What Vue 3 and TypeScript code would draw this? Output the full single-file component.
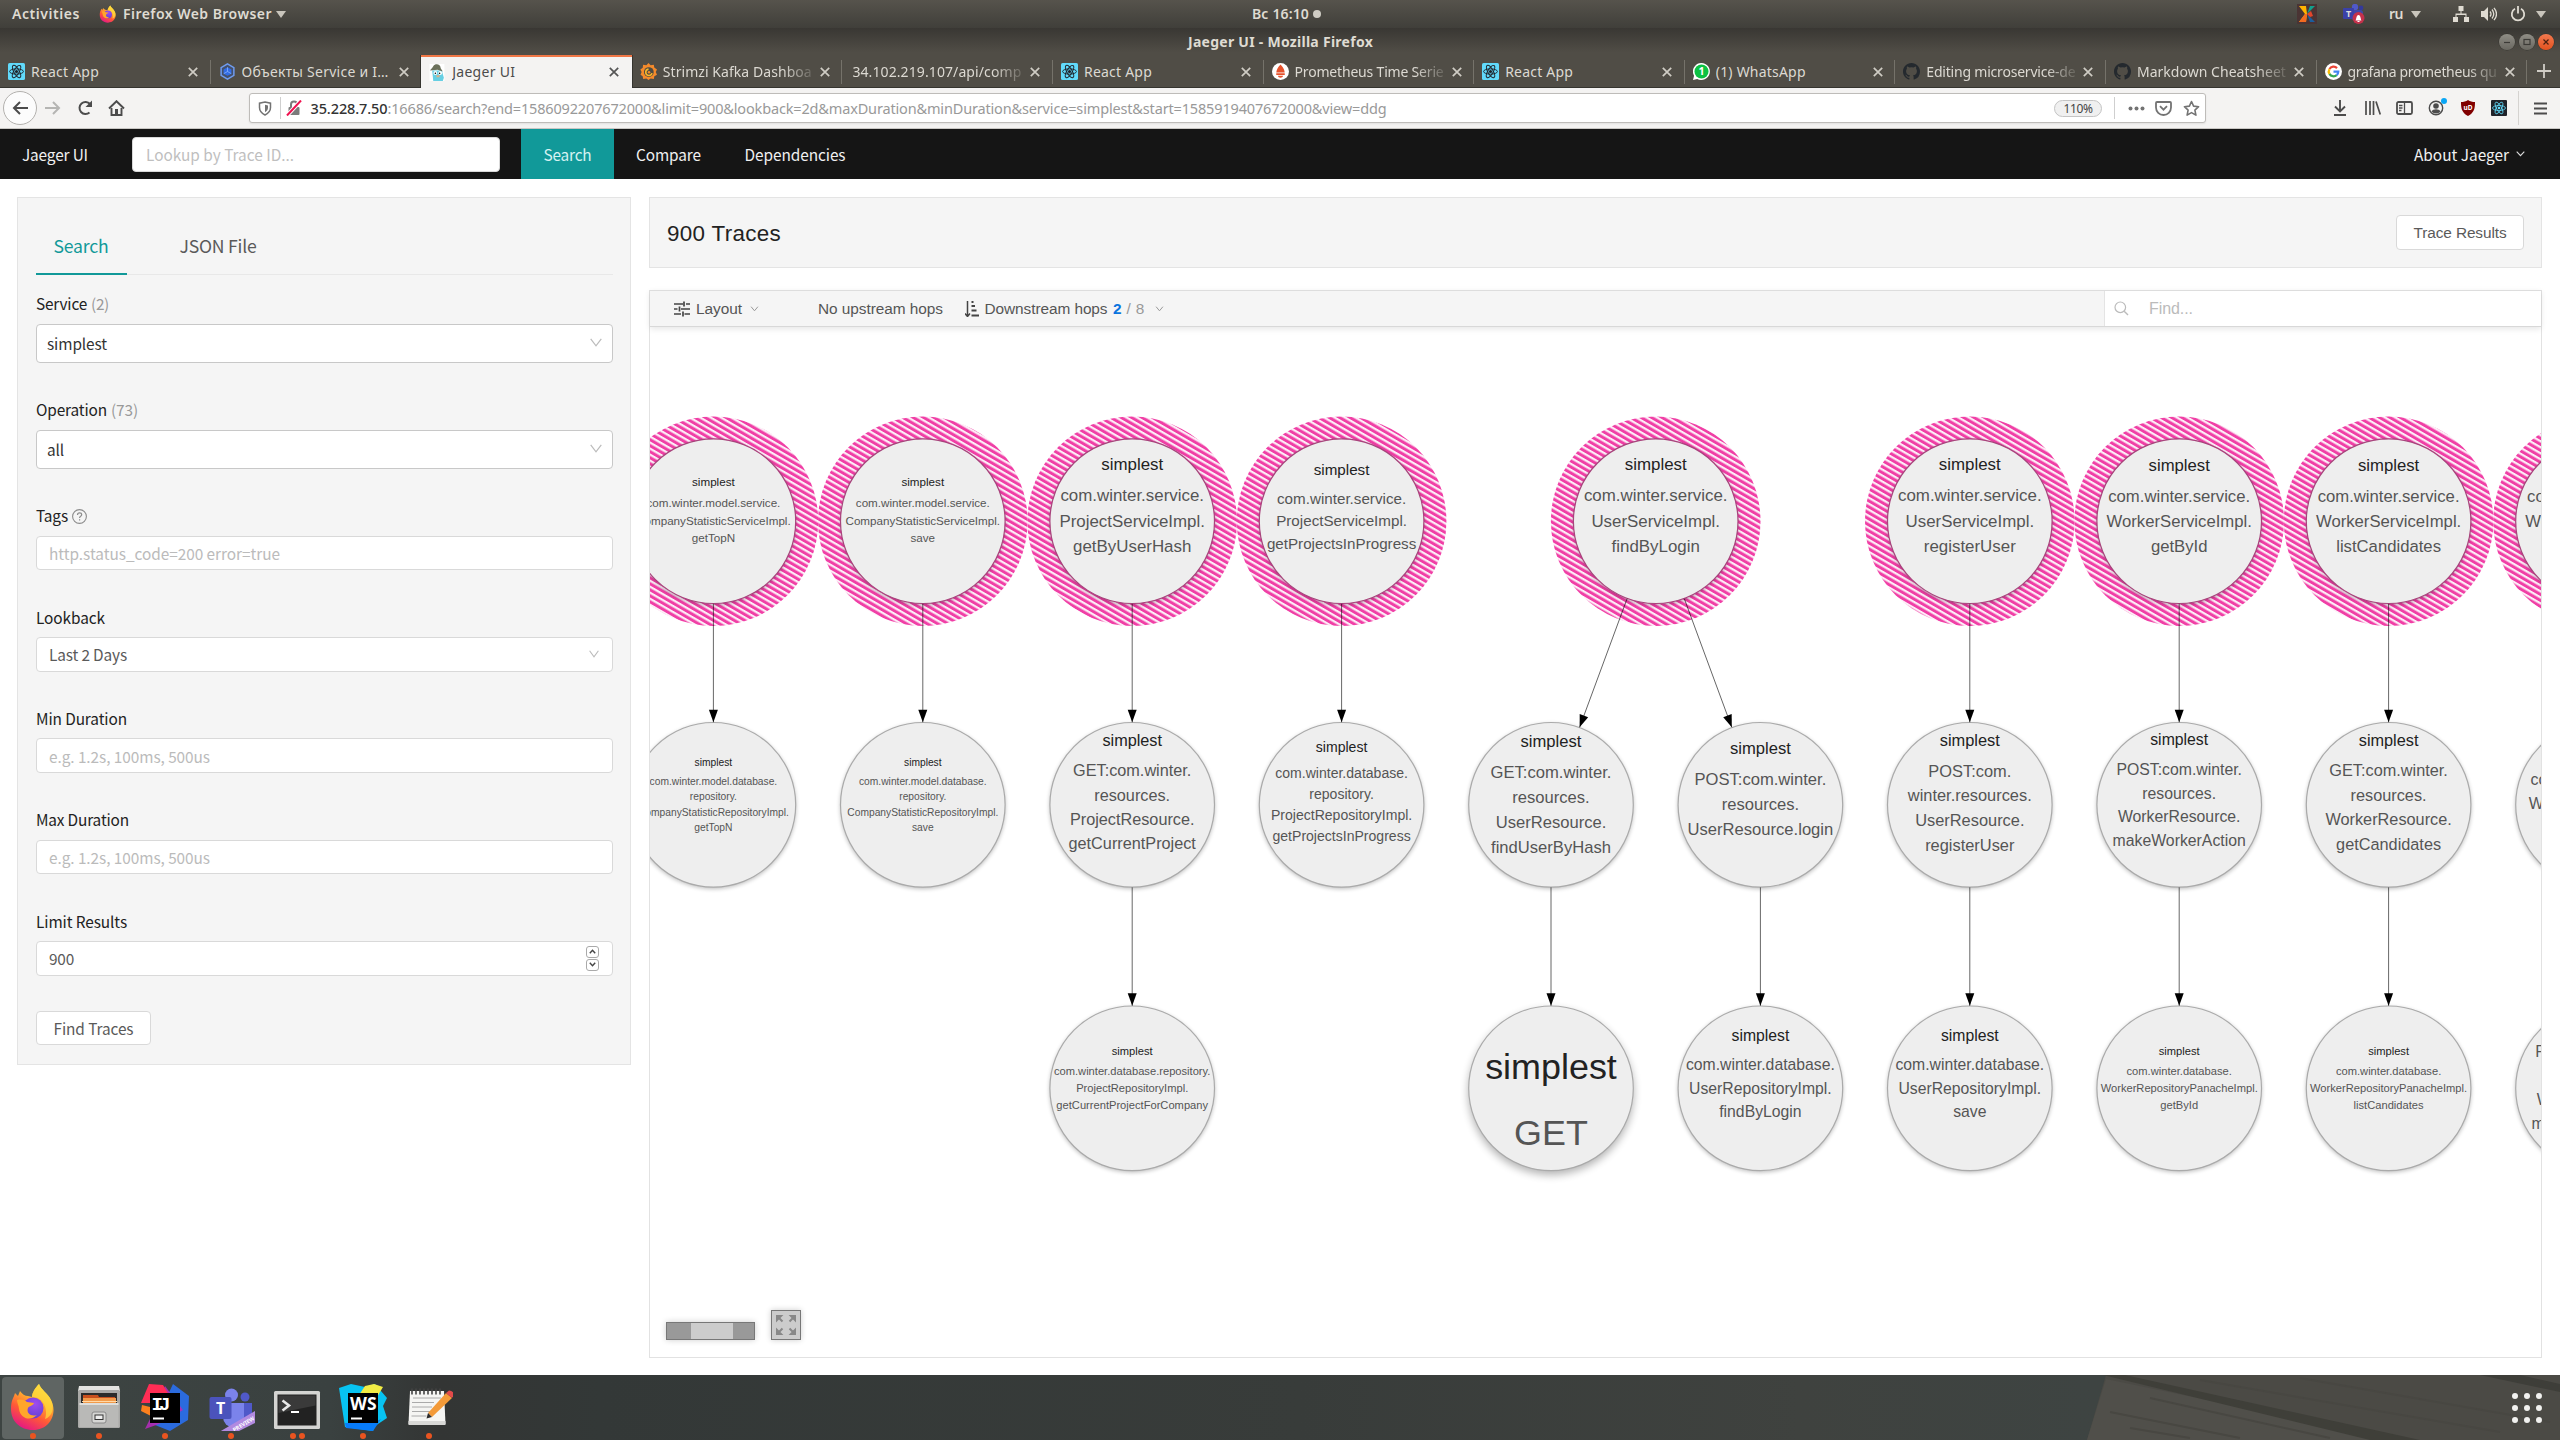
<script setup lang="ts">
interface Tab {
  icon: string
  title: string
  width: number
  faded?: boolean
  active?: boolean
}

interface GraphNode {
  x: number
  row: number
  size: number
  titleY: number
  firstY: number
  lines: string[]
}

// Tracks a text run out to the width its interface font would give it.
const vFit = {
  mounted(el: HTMLElement, binding: { value: number }) {
    const count = (el.textContent ?? '').length
    const natural = el.getBoundingClientRect().width
    if (count > 0) el.style.letterSpacing = `${(binding.value - natural) / count}px`
  },
}

const tabs: Tab[] = [
  { icon: 'react', title: 'React App', width: 68 },
  { icon: 'kube', title: 'Объекты Service и I…', width: 147 },
  { icon: 'jaeger', title: 'Jaeger UI', width: 63, active: true },
  { icon: 'grafana', title: 'Strimzi Kafka Dashboa', width: 149, faded: true },
  { icon: '', title: '34.102.219.107/api/comp', width: 169, faded: true },
  { icon: 'react', title: 'React App', width: 68 },
  { icon: 'prom', title: 'Prometheus Time Serie', width: 149, faded: true },
  { icon: 'react', title: 'React App', width: 68 },
  { icon: 'whatsapp', title: '(1) WhatsApp', width: 90 },
  { icon: 'github', title: 'Editing microservice-de', width: 149, faded: true },
  { icon: 'github', title: 'Markdown Cheatsheet', width: 149, faded: true },
  { icon: 'google', title: 'grafana prometheus qu', width: 149, faded: true },
]

const R = 82.6
const rowY = [521.2, 804.8, 1088.3]
const col = (i: number) => 713.4 + 209.4 * i

const svc = 'com.winter.service.'
const nodes: GraphNode[] = [
  { x: col(0), row: 0, size: 11.65, titleY: 482.3, firstY: 503.6, lines: ['com.winter.model.service.', 'CompanyStatisticServiceImpl.', 'getTopN'] },
  { x: col(1), row: 0, size: 11.65, titleY: 482.3, firstY: 503.6, lines: ['com.winter.model.service.', 'CompanyStatisticServiceImpl.', 'save'] },
  { x: col(2), row: 0, size: 16.9, titleY: 464.6, firstY: 496, lines: [svc, 'ProjectServiceImpl.', 'getByUserHash'] },
  { x: col(3), row: 0, size: 15.2, titleY: 470, firstY: 498.8, lines: [svc, 'ProjectServiceImpl.', 'getProjectsInProgress'] },
  { x: 1655.7, row: 0, size: 16.9, titleY: 464.6, firstY: 496, lines: [svc, 'UserServiceImpl.', 'findByLogin'] },
  { x: col(6), row: 0, size: 16.9, titleY: 464.6, firstY: 496, lines: [svc, 'UserServiceImpl.', 'registerUser'] },
  { x: col(7), row: 0, size: 16.7, titleY: 465.5, firstY: 496.5, lines: [svc, 'WorkerServiceImpl.', 'getById'] },
  { x: col(8), row: 0, size: 16.7, titleY: 465.5, firstY: 496.5, lines: [svc, 'WorkerServiceImpl.', 'listCandidates'] },
  { x: col(9), row: 0, size: 16.7, titleY: 465.5, firstY: 496.5, lines: [svc, 'WorkerServiceImpl.', 'action'] },

  { x: col(0), row: 1, size: 10.25, titleY: 762.6, firstY: 781.8, lines: ['com.winter.model.database.', 'repository.', 'CompanyStatisticRepositoryImpl.', 'getTopN'] },
  { x: col(1), row: 1, size: 10.25, titleY: 762.6, firstY: 781.8, lines: ['com.winter.model.database.', 'repository.', 'CompanyStatisticRepositoryImpl.', 'save'] },
  { x: col(2), row: 1, size: 16.25, titleY: 740.6, firstY: 771, lines: ['GET:com.winter.', 'resources.', 'ProjectResource.', 'getCurrentProject'] },
  { x: col(3), row: 1, size: 14.05, titleY: 747.3, firstY: 773.5, lines: ['com.winter.database.', 'repository.', 'ProjectRepositoryImpl.', 'getProjectsInProgress'] },
  { x: col(4), row: 1, size: 16.6, titleY: 741.7, firstY: 772.7, lines: ['GET:com.winter.', 'resources.', 'UserResource.', 'findUserByHash'] },
  { x: col(5), row: 1, size: 16.6, titleY: 748.9, firstY: 779.8, lines: ['POST:com.winter.', 'resources.', 'UserResource.login'] },
  { x: col(6), row: 1, size: 16.4, titleY: 740.8, firstY: 771.6, lines: ['POST:com.', 'winter.resources.', 'UserResource.', 'registerUser'] },
  { x: col(7), row: 1, size: 15.8, titleY: 739.8, firstY: 769.8, lines: ['POST:com.winter.', 'resources.', 'WorkerResource.', 'makeWorkerAction'] },
  { x: col(8), row: 1, size: 16.3, titleY: 740.6, firstY: 771, lines: ['GET:com.winter.', 'resources.', 'WorkerResource.', 'getCandidates'] },
  { x: col(9), row: 1, size: 15.9, titleY: 750, firstY: 780.3, lines: ['com.winter.service.', 'WorkerServiceImpl.', 'action'] },

  { x: col(2), row: 2, size: 11.15, titleY: 1051.5, firstY: 1071.7, lines: ['com.winter.database.repository.', 'ProjectRepositoryImpl.', 'getCurrentProjectForCompany'] },
  { x: col(4), row: 2, size: 35.9, titleY: 1067.2, firstY: 1133.7, lines: ['GET'] },
  { x: col(5), row: 2, size: 15.75, titleY: 1035.8, firstY: 1065, lines: ['com.winter.database.', 'UserRepositoryImpl.', 'findByLogin'] },
  { x: col(6), row: 2, size: 15.75, titleY: 1035.8, firstY: 1065, lines: ['com.winter.database.', 'UserRepositoryImpl.', 'save'] },
  { x: col(7), row: 2, size: 11.15, titleY: 1051.5, firstY: 1071.7, lines: ['com.winter.database.', 'WorkerRepositoryPanacheImpl.', 'getById'] },
  { x: col(8), row: 2, size: 11.15, titleY: 1051.5, firstY: 1071.7, lines: ['com.winter.database.', 'WorkerRepositoryPanacheImpl.', 'listCandidates'] },
  { x: col(9), row: 2, size: 15.8, titleY: 1022, firstY: 1052.4, lines: ['POST:com.winter.', 'resources.', 'WorkerResource.', 'makeWorkerAction'] },
]

interface Edge { x1: number; y1: number; x2: number; y2: number }
const link = (xa: number, ra: number, xb: number, rb: number): Edge => {
  const dx = xb - xa
  const dy = rowY[rb] - rowY[ra]
  const len = Math.hypot(dx, dy)
  const ux = dx / len
  const uy = dy / len
  return { x1: xa + ux * R, y1: rowY[ra] + uy * R, x2: xb - ux * R, y2: rowY[rb] - uy * R }
}
const edges: Edge[] = [
  ...[0, 1, 2, 3, 6, 7, 8].map((c) => link(col(c), 0, col(c), 1)),
  link(1655.7, 0, col(4), 1),
  link(1655.7, 0, col(5), 1),
  ...[2, 4, 5, 6, 7, 8].map((c) => link(col(c), 1, col(c), 2)),
]
</script>

<template>
  <div class="desktop">
    <!-- GNOME top bar -->
    <header class="topbar">
      <div class="tb-left">
        <span class="tb-act"><span v-fit="68">Activities</span></span>
        <svg class="tb-fox" width="18" height="18" viewBox="0 0 48 48"><use href="#firefox" /></svg>
        <span class="tb-app"><span v-fit="149">Firefox Web Browser</span></span>
        <i class="caret" />
      </div>
      <div class="tb-mid"><span v-fit="57">Вс 16:10</span><i class="dot" /></div>
      <div class="tb-right">
        <svg class="t-k" width="20" height="20" viewBox="0 0 20 20">
          <rect width="20" height="20" fill="#4a3434" />
          <path d="M2 2h7l1 8-1 8H2l6-8z" fill="#ffb400" /><path d="M2 18l6-8 2 0-1 8z" fill="#f26a21" />
          <path d="M18 2l-8 8 3-8z" fill="#12a08c" /><path d="M10 10l8 8h-5z" fill="#1b5e9e" /><path d="M10 10l4-3 2 5-3 1z" fill="#e2452b" />
        </svg>
        <svg class="t-teams" width="22" height="20" viewBox="0 0 22 20">
          <circle cx="12" cy="3" r="3.2" fill="#5059c9" /><circle cx="18" cy="4" r="2.4" fill="#343a9a" />
          <rect x="8" y="6" width="12" height="10" rx="3" fill="#4048a8" /><rect y="4" width="11" height="11" rx="1" fill="#3b41a8" />
          <text x="5.5" y="13" text-anchor="middle" font-size="9" font-weight="700" fill="#ddd">T</text>
          <circle cx="15.5" cy="14" r="6" fill="#c4314b" /><path d="M12.5 16.5c1-1 .6-5.5 3-5.5s2 4.500 3 5.500zM14.500 17h2v1h-2z" fill="#fff" />
        </svg>
        <span class="t-ru"><span v-fit="14">ru</span></span>
        <i class="caret c2" />
        <svg class="t-net" width="16" height="16" viewBox="0 0 16 16" fill="#dfdbd2"><path d="M5.500 0h5v5h-2v2.500h5V11H16v5h-5v-5h1.500V9h-9v2H5v5H0v-5h2.500V7.500h5V5h-2z" /></svg>
        <svg class="t-vol" width="16" height="16" viewBox="0 0 16 16"><path d="M0 5h3l4-4v14l-4-4H0z" fill="#dfdbd2" /><path d="M9 5.500q2 2.500 0 5M11 3.500q3.500 4.500 0 9M13 1.800q5 6.200 0 12.400" fill="none" stroke="#dfdbd2" stroke-width="1.300" /></svg>
        <svg class="t-pow" width="16" height="16" viewBox="0 0 16 16" fill="none" stroke="#dfdbd2" stroke-width="1.800"><path d="M5 2.800a6.200 6.200 0 1 0 6 0M8 0v7.500" /></svg>
        <i class="caret c3" />
      </div>
    </header>

    <!-- Window title -->
    <div class="titlebar">
      <span class="win-title"><span v-fit="185">Jaeger UI - Mozilla Firefox</span></span>
      <div class="win-btns">
        <i class="wb"><svg width="16" height="16"><path d="M5 8.500h6" stroke="#3c3b37" stroke-width="1.200" /></svg></i>
        <i class="wb"><svg width="16" height="16"><rect x="5" y="5.500" width="6" height="5" fill="none" stroke="#3c3b37" stroke-width="1.200" /></svg></i>
        <i class="wb close"><svg width="16" height="16"><path d="M5.500 5.500l5 5m0-5l-5 5" stroke="#4a2010" stroke-width="1.200" /></svg></i>
      </div>
    </div>

    <!-- Tabs -->
    <div class="tabs">
      <div v-for="(t, i) in tabs" :key="i" class="tab" :class="{ active: t.active, noicon: !t.icon, nosep: i === 1 || i === 2 }">
        <svg v-if="t.icon" class="fav" width="17" height="17" viewBox="0 0 16 16"><use :href="'#' + t.icon" /></svg>
        <span class="tab-t" :class="{ faded: t.faded }"><span v-fit="t.width">{{ t.title }}</span></span>
        <svg class="tab-x" width="10" height="10" viewBox="0 0 10 10"><path d="M.8.8l8.400 8.400m0-8.400L.8 9.200" stroke="currentColor" stroke-width="1.700" /></svg>
      </div>
      <div class="newtab"><svg width="14" height="14"><path d="M7 0v14M0 7h14" stroke="#d0cdc6" stroke-width="1.800" /></svg></div>
    </div>

    <!-- Navigation toolbar -->
    <div class="toolbar">
      <div class="back"><svg width="16" height="14" viewBox="0 0 16 14"><path d="M8 1L2 7l6 6M2 7h14" fill="none" stroke="#4c4c4c" stroke-width="2" /></svg></div>
      <svg class="fwd" width="16" height="14" viewBox="0 0 16 14"><path d="M8 1l6 6-6 6M14 7H0" fill="none" stroke="#b5b5b3" stroke-width="2" /></svg>
      <svg class="rel" width="16" height="16" viewBox="0 0 16 16"><path d="M12.500 12.500A6 6 0 1 1 13 4" fill="none" stroke="#4c4c4c" stroke-width="2" /><path d="M15 .5v6.500H8.500z" fill="#4c4c4c" /></svg>
      <svg class="home" width="17" height="16" viewBox="0 0 17 16"><path d="M1 8.500L8.500 1.200 16 8.500" fill="none" stroke="#4c4c4c" stroke-width="1.900" /><path d="M3.500 8v7h10V8" fill="none" stroke="#4c4c4c" stroke-width="1.900" /><path d="M7 9h3v6H7z" fill="#4c4c4c" /></svg>
      <div class="url">
        <svg class="shield" width="14" height="15" viewBox="0 0 14 15"><path d="M7 1l5.500 1.200v4.300c0 3.800-2.500 6-5.500 7.500-3-1.500-5.500-3.700-5.500-7.500V2.200z" fill="none" stroke="#737373" stroke-width="1.500" /><path d="M7 3.700v7.600c2-1.200 3-2.600 3-5V4.400z" fill="#737373" /></svg>
        <i class="usep" />
        <svg class="lock" width="16" height="16" viewBox="0 0 16 16"><path d="M5 7V4.500a3 3 0 0 1 6 0V7" fill="none" stroke="#7b7b7b" stroke-width="2" /><rect x="2.500" y="7" width="11" height="8" rx="1" fill="#7b7b7b" /><path d="M1 15.500L15 .5" stroke="#fff" stroke-width="4" /><path d="M1 15.500L15 .5" stroke="#f0114f" stroke-width="2" /></svg>
        <div class="addr"><b v-fit="77">35.228.7.50</b><span v-fit="999">:16686/search?end=1586092207672000&amp;limit=900&amp;lookback=2d&amp;maxDuration&amp;minDuration&amp;service=simplest&amp;start=1585919407672000&amp;view=ddg</span></div>
        <div class="zoom"><span v-fit="29">110%</span></div>
        <i class="usep s2" />
        <svg class="more" width="17" height="5"><circle cx="2.500" cy="2.500" r="2" fill="#737373" /><circle cx="8.500" cy="2.500" r="2" fill="#737373" /><circle cx="14.500" cy="2.500" r="2" fill="#737373" /></svg>
        <svg class="pocket" width="17" height="15" viewBox="0 0 17 15"><path d="M2 1h13a1 1 0 0 1 1 1v4.500a7.500 7.500 0 0 1-15 0V2a1 1 0 0 1 1-1z" fill="none" stroke="#737373" stroke-width="1.800" /><path d="M5 5.200l3.500 3.500L12 5.200" fill="none" stroke="#737373" stroke-width="1.800" /></svg>
        <svg class="star" width="17" height="17" viewBox="0 0 17 17"><path d="M8.500 1.500l2.100 4.600 5 .6-3.700 3.400 1 5-4.400-2.500-4.400 2.500 1-5L1.400 6.700l5-.6z" fill="none" stroke="#737373" stroke-width="1.600" stroke-linejoin="round" /></svg>
      </div>
      <div class="acts">
        <svg class="a1" width="14" height="16" viewBox="0 0 14 16"><path d="M7 0v11M2 6.500l5 5 5-5M1 15h12" fill="none" stroke="#4c4c4c" stroke-width="1.900" /></svg>
        <svg class="a2" width="16" height="14" viewBox="0 0 16 14"><path d="M1 0v14M5 0v14M8.500 0v14M11 .5l4.300 13" fill="none" stroke="#4c4c4c" stroke-width="1.700" /></svg>
        <svg class="a3" width="17" height="14" viewBox="0 0 17 14"><rect x="1" y="1" width="15" height="12" rx="1.500" fill="none" stroke="#4c4c4c" stroke-width="1.800" /><path d="M8.500 1v12M3 4.500h3.500M3 7h3.500M3 9.500h2.500" stroke="#4c4c4c" stroke-width="1.300" /></svg>
        <svg class="a4" width="20" height="18" viewBox="0 0 20 18"><circle cx="8" cy="10" r="6.700" fill="none" stroke="#4c4c4c" stroke-width="1.400" /><circle cx="8" cy="8" r="2.800" fill="#4c4c4c" /><path d="M3.500 13.500c1.500-3 7.500-3 9 0-2 2.500-7 2.500-9 0z" fill="#4c4c4c" /><circle cx="16" cy="3" r="3" fill="#0aa6f5" /></svg>
        <svg class="a5" width="16" height="16" viewBox="0 0 16 16"><path d="M8 0c2 1.500 4.500 2 7 2 0 6-.5 10.500-7 14C1.500 12.500 1 8 1 2c2.500 0 5-.5 7-2z" fill="#800000" /><text x="8" y="9.500" text-anchor="middle" font-size="6.500" font-weight="700" fill="#fff">uD</text></svg>
        <svg class="a6" width="16" height="16" viewBox="0 0 16 16"><rect width="16" height="16" rx="1" fill="#20232a" /><g fill="none" stroke="#61dafb" stroke-width=".8"><ellipse cx="8" cy="8" rx="6.500" ry="2.500" /><ellipse cx="8" cy="8" rx="6.500" ry="2.500" transform="rotate(60 8 8)" /><ellipse cx="8" cy="8" rx="6.500" ry="2.500" transform="rotate(120 8 8)" /></g><circle cx="8" cy="8" r="1.300" fill="#61dafb" /></svg>
        <i class="asep" />
        <svg class="a7" width="13" height="13" viewBox="0 0 13 13"><path d="M0 1.500h13M0 6.500h13M0 11.500h13" stroke="#4c4c4c" stroke-width="1.900" /></svg>
      </div>
    </div>

    <!-- Jaeger navigation -->
    <nav class="nav">
      <span class="brand"><span v-fit="66">Jaeger UI</span></span>
      <div class="lookup"><span v-fit="148">Lookup by Trace ID...</span></div>
      <span class="n-item on"><span v-fit="48">Search</span></span>
      <span class="n-item cmp"><span v-fit="65">Compare</span></span>
      <span class="n-item dep"><span v-fit="101">Dependencies</span></span>
      <span class="about"><span v-fit="95">About Jaeger</span><svg width="9" height="6" viewBox="0 0 9 6"><path d="M.7.7l3.800 4 3.800-4" fill="none" stroke="#ddd" stroke-width="1.100" /></svg></span>
    </nav>

    <main class="page">
      <aside class="panel side">
        <div class="stabs">
          <div class="stab on"><span v-fit="55">Search</span></div>
          <div class="stab"><span v-fit="77">JSON File</span></div>
        </div>
        <div class="field">
          <label><span v-fit="51">Service</span><em v-fit="18">(2)</em></label>
          <div class="ctl big"><span v-fit="60">simplest</span><svg width="12" height="9" viewBox="0 0 12 9"><path d="M.7.8L6 7.800 11.300.8" fill="none" stroke="#bbb" stroke-width="1.200" /></svg></div>
        </div>
        <div class="field">
          <label><span v-fit="71">Operation</span><em v-fit="27">(73)</em></label>
          <div class="ctl big"><span v-fit="17">all</span><svg width="12" height="9" viewBox="0 0 12 9"><path d="M.7.8L6 7.800 11.300.8" fill="none" stroke="#bbb" stroke-width="1.200" /></svg></div>
        </div>
        <div class="field">
          <label><span v-fit="32">Tags</span><svg class="q" width="15" height="15" viewBox="0 0 15 15"><circle cx="7.500" cy="7.500" r="6.900" fill="none" stroke="#8c8c8c" stroke-width="1.100" /><path d="M5.500 6c0-2.800 4.200-2.600 4.200-.2 0 1.600-2.100 1.500-2.100 3.100M7.600 10.200v1.400" fill="none" stroke="#8c8c8c" stroke-width="1.200" /></svg></label>
          <div class="ctl ph"><span v-fit="231">http.status_code=200 error=true</span></div>
        </div>
        <div class="field">
          <label><span v-fit="69">Lookback</span></label>
          <div class="ctl lb"><span v-fit="78">Last 2 Days</span><svg width="10" height="8" viewBox="0 0 10 8"><path d="M.6.7L5 6.900 9.400.7" fill="none" stroke="#bbb" stroke-width="1.100" /></svg></div>
        </div>
        <div class="field">
          <label><span v-fit="91">Min Duration</span></label>
          <div class="ctl ph"><span v-fit="161">e.g. 1.2s, 100ms, 500us</span></div>
        </div>
        <div class="field">
          <label><span v-fit="93">Max Duration</span></label>
          <div class="ctl ph"><span v-fit="161">e.g. 1.2s, 100ms, 500us</span></div>
        </div>
        <div class="field">
          <label><span v-fit="91">Limit Results</span></label>
          <div class="ctl"><span v-fit="25">900</span>
            <div class="spin">
              <i><svg width="7" height="5"><path d="M.8 4.200l2.700-3 2.700 3" fill="none" stroke="#444" stroke-width="1.400" /></svg></i>
              <i><svg width="7" height="5"><path d="M.8.8l2.700 3 2.700-3" fill="none" stroke="#444" stroke-width="1.400" /></svg></i>
            </div>
          </div>
        </div>
        <button class="btn find"><span v-fit="80">Find Traces</span></button>
      </aside>

      <section class="results">
        <div class="panel head">
          <h2><span v-fit="114">900 Traces</span></h2>
          <button class="btn tr"><span v-fit="93">Trace Results</span></button>
        </div>
        <div class="graph">
          <div class="gbar">
            <svg class="g1" width="16" height="16" viewBox="0 0 16 16"><path d="M0 3h9M12 3h4M10 .5v5M0 8h3.500M7 8h9M5.500 5.500v5M0 13h7M10.500 13H16M9 10.500v5" stroke="#444" stroke-width="1.700" /></svg>
            <span class="g2"><span v-fit="46">Layout</span></span>
            <svg class="gc c1" width="9" height="6" viewBox="0 0 8 6"><path d="M.6.7L4 4.800 7.400.7" fill="none" stroke="#999" /></svg>
            <span class="g3"><span v-fit="125">No upstream hops</span></span>
            <svg class="g4" width="14" height="16" viewBox="0 0 14 16"><path d="M2.500 0v14.500M0 12.500l2.500 3 2.500-3" fill="none" stroke="#444" stroke-width="1.500" /><path d="M6.500 1h2M6.500 5h3.500M6.500 9.500h5M6.500 14.500H14" stroke="#444" stroke-width="1.900" /></svg>
            <span class="g5"><span v-fit="123">Downstream hops</span></span>
            <b class="g6">2</b><span class="g7"><span v-fit="18">/ 8</span></span>
            <svg class="gc c4" width="9" height="6" viewBox="0 0 8 6"><path d="M.6.7L4 4.800 7.400.7" fill="none" stroke="#999" /></svg>
            <div class="gfind">
              <svg width="15" height="15" viewBox="0 0 15 15"><circle cx="6.300" cy="6.300" r="5.300" fill="none" stroke="#bbb" stroke-width="1.200" /><path d="M10.200 10.200l3.800 3.800" stroke="#bbb" stroke-width="1.400" /></svg>
              <span v-fit="44">Find...</span>
            </div>
          </div>
          <svg class="canvas" width="1891" height="1030" viewBox="650 327 1891 1030">
            <defs>
              <pattern id="stripes" width="5.200" height="5.200" patternUnits="userSpaceOnUse" patternTransform="rotate(-60)">
                <rect width="5.200" height="5.200" fill="#fdeef7" /><rect width="3" height="5.200" fill="#f03fa6" />
              </pattern>
              <filter id="soft" x="-20%" y="-20%" width="140%" height="140%"><feGaussianBlur stdDeviation="2" /></filter>
              <filter id="softer" x="-20%" y="-20%" width="140%" height="140%"><feGaussianBlur stdDeviation="4" /></filter>
            </defs>
            <g v-for="(n, i) in nodes" :key="'n' + i">
              <circle v-if="n.row === 0" :cx="n.x" :cy="rowY[0]" r="104.800" fill="url(#stripes)" />
              <circle :cx="n.x" :cy="rowY[n.row] + (n.size > 30 ? 4 : 1.500)" :r="R" fill="#000" :opacity="n.size > 30 ? 0.3 : 0.26" :filter="n.size > 30 ? 'url(#softer)' : 'url(#soft)'" />
              <circle :cx="n.x" :cy="rowY[n.row]" :r="R - 0.300" fill="#eee" :stroke="n.row === 0 ? '#a8447c' : '#aaa'" stroke-width="1.200" />
              <text :x="n.x" :y="n.titleY + n.size * 0.33" :font-size="n.size" text-anchor="middle" fill="#222">simplest</text>
              <text v-for="(l, k) in n.lines" :key="k" :x="n.x" :y="n.firstY + n.size * (0.32 + 1.5 * k)" :font-size="n.size" text-anchor="middle" fill="#555">{{ l }}</text>
            </g>
            <g v-for="(e, i) in edges" :key="'e' + i">
              <line :x1="e.x1" :y1="e.y1" :x2="e.x2" :y2="e.y2" stroke="#000" stroke-opacity=".6" stroke-width="1" />
              <path d="M0 0L-12.500-4.500V4.500z" :transform="`translate(${e.x2} ${e.y2}) rotate(${(Math.atan2(e.y2 - e.y1, e.x2 - e.x1) * 180) / Math.PI})`" />
            </g>
          </svg>
          <div class="mini">
            <div class="map"><i /></div>
            <div class="full"><svg width="20" height="20" viewBox="0 0 20 20" fill="#888" stroke="#888" stroke-width="2"><path d="M1 1h4L1 5zM2 2l4.500 4.500M19 1h-4l4 4zM18 2l-4.500 4.500M1 19h4l-4-4zM2 18l4.500-4.500M19 19h-4l4-4zM18 18l-4.500-4.500" /></svg></div>
          </div>
        </div>
      </section>
    </main>

    <!-- Dock -->
    <footer class="dock">
      <svg class="wood" width="480" height="65" viewBox="2080 1375 480 65">
        <path d="M2106 1375H2560V1440H2087z" fill="#4b4a45" />
        <path d="M2106 1379L2400 1440H2087z" fill="#504f4a" />
        <path d="M2103 1375h22L2420 1440h-50z" fill="#3f3f39" />
        <path d="M2480 1375h40l40 9v8z" fill="#3e3e39" />
        <path d="M2150 1398l180 40M2110 1412l130 26M2200 1380l300 52M2300 1378l250 44M2130 1428l60 10" stroke="#484742" stroke-width="2" fill="none" />
      </svg>
      <div class="app cur"><svg width="48" height="48" viewBox="0 0 48 48"><use href="#firefox" /></svg><p><i /></p></div>
      <div class="app"><svg width="48" height="48" viewBox="0 0 48 48">
        <path d="M4 3h40l1 5H3z" fill="#e3e3e1" /><rect x="3" y="7" width="42" height="38" rx="1.500" fill="#a9a9a7" /><rect x="6" y="10" width="36" height="11" fill="#2b2b2b" />
        <path d="M8 12h15l1 2h16v6H8z" fill="#c8501e" /><path d="M8 15h33v6H8z" fill="#f29b4b" /><path d="M7 18h35v1H7z" fill="#ffd9a8" />
        <rect x="4.500" y="20" width="39" height="24" fill="#b9b9b7" /><path d="M4.500 20h39v2h-39z" fill="#dededc" /><rect x="17" y="29" width="14" height="11" rx="2" fill="#d6d6d4" stroke="#888" /><rect x="20" y="32" width="8" height="4.500" fill="#eee" stroke="#333" />
      </svg><p><i /></p></div>
      <div class="app"><svg width="48" height="48" viewBox="0 0 48 48">
        <path d="M1 22l8 2 8 6-5 4-12-6z" fill="#fc801d" /><path d="M32 1l16 12-1 24-18 11-20-8 14-20z" fill="#2b6bde" />
        <path d="M24 3L12 30 4 46l14-5 24-14z" fill="#b02cb8" opacity=".9" /><path d="M8 1l14 1 6 10-12 8L0 20z" fill="#ff2d55" />
        <rect x="9" y="10" width="30" height="30" fill="#000" /><text x="10.500" y="26.500" font-size="19" font-weight="700" fill="#fff" textLength="19" font-family="Liberation Mono, monospace">IJ</text><rect x="12" y="34.500" width="11" height="2" fill="#fff" />
      </svg><p><i /></p></div>
      <div class="app"><svg width="48" height="48" viewBox="0 0 48 48">
        <circle cx="24.500" cy="12" r="6.500" fill="#7b83eb" /><circle cx="38" cy="14" r="4.500" fill="#5059c9" /><path d="M30 20h15v12a8 8 0 0 1-15 0z" fill="#5059c9" /><path d="M16 20h21v14a10.500 10.500 0 0 1-21 0z" fill="#7b83eb" />
        <rect x="2.500" y="14" width="22" height="22" rx="2" fill="#4b53bc" /><text x="13.500" y="31" text-anchor="middle" font-size="16" font-weight="700" fill="#fff">T</text>
        <path d="M13 48.500L48 28v12L31 48.500z" fill="#b18ae0" /><text x="36.500" y="43" text-anchor="middle" font-size="5.500" font-weight="700" fill="#fff" transform="rotate(-31 36.500 41)">PREVIEW</text>
      </svg><p><i /></p></div>
      <div class="app"><svg width="48" height="48" viewBox="0 0 48 48">
        <rect x="1" y="8" width="46" height="38" rx="1.500" fill="#d4d4d2" /><rect x="4.500" y="11.500" width="39" height="31" fill="#222" /><path d="M5.500 12.500h37v10L5.500 30z" fill="#3a3a3a" />
        <path d="M9.500 17.500l6.500 5-6.500 5" fill="none" stroke="#e8e8e8" stroke-width="2.600" /><path d="M18 29h8" stroke="#fff" stroke-width="2" />
      </svg><p><i /><i /></p></div>
      <div class="app"><svg width="48" height="48" viewBox="0 0 48 48">
        <path d="M0 5l12-4 14 3 10-3 12 14-4 8 4 12-12 8-2 5-28-4z" fill="#07c3f2" /><path d="M26 3l9-2 9 3-6 10-18-2z" fill="#f2ec44" /><path d="M6 40l28 0 8-4-8 12-27-3z" fill="#087cfa" />
        <rect x="9" y="10" width="30" height="30" fill="#000" /><text x="11" y="26.500" font-size="17.500" font-weight="700" fill="#fff">WS</text><rect x="12" y="34.500" width="11" height="2" fill="#fff" />
      </svg><p><i /></p></div>
      <div class="app"><svg width="48" height="48" viewBox="0 0 48 48">
        <path d="M5 8h34l1.500 33h-37z" fill="#f5f5f3" /><path d="M3.500 38h37v4h-37z" fill="#d8d8d6" /><path d="M7 5.500v6M11 5.500v6M15 5.500v6M19 5.500v6M23 5.500v6M27 5.500v6M31 5.500v6M35 5.500v6" stroke="#444" stroke-width="1.600" />
        <path d="M8 15h28M7 19.500h22M7 24h20M7 28.500h18M6.500 33h15" stroke="#aaa" stroke-width="1" /><path d="M41 10l6 5-20 19-4-4z" fill="#f39a38" /><path d="M41 10l3-2.500q4 0 5 4L47 15z" fill="#e24a4a" /><path d="M23 30l4 4-5.500 1.500z" fill="#2c2c2c" />
      </svg><p><i /></p></div>
      <div class="grid9"><i v-for="n in 9" :key="n" /></div>
    </footer>

    <!-- Shared symbols -->
    <svg class="defs" width="0" height="0">
      <defs>
        <linearGradient id="ffa" x1=".8" y1="0" x2=".3" y2="1"><stop offset="0" stop-color="#fff44f" /><stop offset=".35" stop-color="#ffb02e" /><stop offset=".65" stop-color="#ff5a36" /><stop offset="1" stop-color="#e31587" /></linearGradient>
        <radialGradient id="ffb" cx=".6" cy=".3" r=".8"><stop offset="0" stop-color="#a04cf0" /><stop offset="1" stop-color="#5a3fd0" /></radialGradient>
        <symbol id="firefox" viewBox="0 0 48 48">
          <path d="M30 1c2 6 9 9 12 16 7 13-1 30-18 30C11 47 2 38 2 26c0-6 1-9 3-13l1-3 3 3 2-5c2 3 5 5 8 5l4 1C23 10 26 5 30 1z" fill="url(#ffa)" />
          <circle cx="24" cy="25" r="10.500" fill="url(#ffb)" />
          <path d="M8 17c4-1 8 0 10 2l7 1c-1 3-5 3-6 5-2 5 3 9 9 7-7 7-17 3-18-6-.3-4-2-6-2-9z" fill="#ffa62b" />
          <path d="M30 1c2 6 9 9 12 16 2 4 2 8 1 12-1 3-4 6-7 7 2-6 1-13-3-18-4-4-7-4-10-4C23 10 26 5 30 1z" fill="#ffd83c" opacity=".75" />
        </symbol>
        <symbol id="react" viewBox="0 0 16 16"><rect width="16" height="16" rx="1.500" fill="#61dafb" /><g fill="none" stroke="#20232a" stroke-width=".9"><ellipse cx="8" cy="8" rx="6.500" ry="2.500" /><ellipse cx="8" cy="8" rx="6.500" ry="2.500" transform="rotate(60 8 8)" /><ellipse cx="8" cy="8" rx="6.500" ry="2.500" transform="rotate(120 8 8)" /></g><circle cx="8" cy="8" r="1.500" fill="#20232a" /></symbol>
        <symbol id="kube" viewBox="0 0 16 16"><path d="M8 .8l6 3.500v7.400l-6 3.500-6-3.500V4.300z" fill="#44506a" stroke="#6f9cf0" stroke-width="1.400" /><path d="M8 4l3.700 2v4L8 12l-3.700-2V6z" fill="#326ce5" /><path d="M8 8V4M8 8l3.500 2M8 8l-3.500 2" stroke="#9cc0ff" stroke-width=".6" /></symbol>
        <symbol id="jaeger" viewBox="0 0 16 16"><rect x=".5" width="14" height="16" fill="#fff" /><path d="M3 6h9l2 7-1 3H4z" fill="#66cfe3" /><path d="M1 6c1-2 2-2 3-4 2-3 7-2 7 2l2 3-5-1.500z" fill="#6b705a" /><circle cx="6" cy="8.500" r="1.800" fill="#fff" /><circle cx="10.500" cy="8.500" r="1.800" fill="#fff" /><path d="M7 10.500h3v2H7z" fill="#d8b28a" /><circle cx="6" cy="8.700" r=".7" /><circle cx="10" cy="8.700" r=".7" /></symbol>
        <symbol id="grafana" viewBox="0 0 16 16"><path d="M8 0l2 2 3-.3.400 2.600L16 6l-1.200 2.500L16 11l-2.500 1.500L13 15l-3-.5L8 16l-2-1.500-3 .5-.5-2.500L.5 11l1-2.500L.3 6l2.300-1.600.300-2.800L6 2z" fill="#f58a2b" /><circle cx="8.300" cy="8.500" r="4.600" fill="#4d4b43" /><path d="M11.300 9.500A3 3 0 1 1 8 5.800" fill="none" stroke="#fbb829" stroke-width="1.500" /><circle cx="8.500" cy="8.700" r="1.200" fill="#f58a2b" /></symbol>
        <symbol id="prom" viewBox="0 0 16 16"><circle cx="8" cy="8" r="8" fill="#fff" /><path d="M8 1.500c3 3 3.500 5 4 7.500H4c.5-2.500 1-4.500 4-7.500zM4 9.700h8v1.600H4zM5.500 12h5c-.5 2.500-4.500 2.500-5 0z" fill="#e6522c" /></symbol>
        <symbol id="whatsapp" viewBox="0 0 16 16"><path d="M8 0a8 8 0 1 1-4 15L0 16l1-4A8 8 0 0 1 8 0z" fill="#fff" /><circle cx="8" cy="8" r="6.600" fill="#0cc143" /><text x="8" y="11.500" text-anchor="middle" font-size="10" font-weight="700" fill="#fff">1</text></symbol>
        <symbol id="github" viewBox="0 0 16 16"><path d="M8 0C3.580 0 0 3.580 0 8c0 3.540 2.290 6.530 5.470 7.590.4.070.550-.170.550-.380V13.800c-2.230.480-2.700-1-2.700-1-.360-.920-.890-1.170-.890-1.170-.730-.5.060-.490.060-.490.800.060 1.230.830 1.230.830.710 1.230 1.870.870 2.330.660.070-.520.280-.870.500-1.070-1.770-.2-3.640-.890-3.640-3.950 0-.870.310-1.590.820-2.150-.080-.2-.360-1.020.080-2.120 0 0 .670-.210 2.200.820a7.600 7.600 0 0 1 4 0c1.530-1.040 2.200-.820 2.200-.820.440 1.100.160 1.920.080 2.120.510.560.820 1.270.820 2.150 0 3.070-1.870 3.750-3.650 3.950.290.250.540.730.540 1.480v2.190c0 .210.150.460.550.380A8 8 0 0 0 16 8c0-4.420-3.580-8-8-8z" fill="#24292e" /></symbol>
        <symbol id="google" viewBox="0 0 16 16"><circle cx="8" cy="8" r="8" fill="#fff" /><g fill="none" stroke-width="2.100"><path d="M4.200 5.700A4.500 4.500 0 0 1 11.300 4.800" stroke="#ea4335" /><path d="M4.200 10.300a4.500 4.500 0 0 1 0-4.600" stroke="#fbbc05" /><path d="M11 11.400a4.500 4.500 0 0 1-6.800-1.100" stroke="#34a853" /><path d="M8 8.200h4.500a4.500 4.500 0 0 1-1.500 3.200" stroke="#4285f4" /></g></symbol>
      </defs>
    </svg>
  </div>
</template>

<style>
body { margin: 0; background: #fff; overflow: hidden; }
</style>

<style scoped>
.desktop { width: 2560px; height: 1440px; display: flex; flex-direction: column; background: #fff; overflow: hidden; font-family: "Noto Sans", sans-serif; white-space: nowrap; }
.desktop * { box-sizing: border-box; }
span, b, em { display: inline-block; }
svg { display: block; flex: none; }
.defs { position: absolute; }
i { font-style: normal; display: block; flex: none; }

.topbar { height: 28px; flex: none; display: grid; grid-template-columns: 1252px 1fr 263px; align-items: center; color: #dfdbd2; font-size: 14px; font-weight: 600; line-height: 28px; background: linear-gradient(#56534c, #403f3a); }
.tb-left { display: flex; align-items: center; }
.tb-act { margin-left: 12px; width: 87px; }
.tb-fox { margin-right: 6px; }
.caret { border: 5px solid transparent; border-top: 7px solid #c9c5bc; border-bottom: 0; margin-left: 4px; }
.tb-mid { display: flex; align-items: center; }
.dot { width: 8px; height: 8px; border-radius: 4px; background: #cfccc4; margin-left: 4px; }
.tb-right { display: flex; align-items: center; }
.t-teams { margin-left: 26px; }
.t-ru { margin-left: 24px; width: 22px; }
.caret.c2 { margin-left: 0; }
.t-net { margin-left: 32px; }
.t-vol { margin-left: 12px; }
.t-pow { margin-left: 13px; }
.caret.c3 { margin-left: 10px; }

.titlebar { height: 27px; flex: none; display: grid; grid-template-columns: 1188px 1fr 61px; align-items: center; background: linear-gradient(#393733, #504d46 90%); color: #dfdbd2; }
.win-title { grid-column: 2; font-size: 14px; font-weight: 700; line-height: 19px; padding-bottom: 1px; }
.win-btns { display: flex; gap: 3.500px; }
.wb { width: 16px; height: 16px; border-radius: 8px; background: linear-gradient(#8f8d85, #6a6861); box-shadow: 0 0 0 .5px #35342f; }
.wb.close { background: linear-gradient(#f2794f, #e2521f); }

.tabs { height: 33px; flex: none; display: flex; background: #504d46; border-bottom: 1px solid #35342f; }
.tab { width: 210.600px; flex: none; display: flex; align-items: center; padding-left: 8px; color: #dcd9d2; font-size: 14px; position: relative; padding-top: 1px; }
.tab::after { content: ''; position: absolute; right: 0; top: 5px; height: 24px; width: 1px; background: #75726a; }
.tab.nosep::after { display: none; }
.tab.active { background: #f4f3f2; color: #4c4c4c; border-top: 2px solid #f07746; margin-bottom: -1px; height: 33px; padding: 0 0 1px 8px; box-shadow: -1px 0 #35342f, 1px 0 #35342f; }
.fav { margin-right: 6px; }
.tab.noicon { padding-left: 10px; }
.tab-t { flex: 1; overflow: hidden; line-height: 24px; }
.tab-t.faded { -webkit-mask-image: linear-gradient(90deg, #000 calc(100% - 30px), rgba(0, 0, 0, .15)); mask-image: linear-gradient(90deg, #000 calc(100% - 30px), rgba(0, 0, 0, .15)); }
.tab-x { margin: 0 12.500px 0 7px; color: #cfccc4; }
.tab.active .tab-x { color: #555; }
.newtab { padding: 9px 0 0 10px; }

.toolbar { height: 41px; flex: none; display: flex; align-items: center; background: #f4f3f2; border-bottom: 1px solid #c9c7c4; }
.back { width: 34px; height: 34px; margin-left: 3px; border: 1px solid #b3b1ae; border-radius: 17px; background: #fcfcfc; display: flex; align-items: center; justify-content: center; }
.fwd { margin-left: 8px; }
.rel { margin-left: 16px; }
.home { margin-left: 15px; }
.url { margin-left: 124px; width: 1957px; height: 30px; border: 1px solid #bebcb9; border-radius: 3px; background: #fff; display: flex; align-items: center; box-shadow: 0 1px 2px rgba(0, 0, 0, .08); }
.shield { margin-left: 8px; }
.usep { width: 1px; height: 22px; background: #cfcfcf; margin: 0 5px 0 8px; }
.addr { margin-left: 8.500px; width: 1743.500px; font-size: 14.500px; color: #999; line-height: 26px; }
.addr b { color: #333; font-weight: 500; }
.zoom { width: 48px; height: 17px; border: 1px solid #c4c4c4; border-radius: 9px; background: #f0f0f0; font-size: 12px; line-height: 15px; color: #444; display: flex; justify-content: center; }
.usep.s2 { margin: 0 13px 0 12px; }
.pocket { margin-left: 10px; }
.star { margin-left: 11px; }
.acts { display: flex; align-items: center; margin-left: 127px; }
.a2 { margin-left: 18px; }
.a3 { margin-left: 15px; }
.a4 { margin: -3px 0 0 15px; }
.a5 { margin-left: 12px; }
.a6 { margin-left: 15px; }
.asep { width: 1px; height: 34px; background: #d5d3d0; margin: 0 15px 0 11px; }

.nav { height: 50px; flex: none; display: flex; align-items: center; background: #151515; color: #f0f0f0; font-family: "Noto Sans CJK SC", sans-serif; font-size: 15.400px; line-height: 50px; }
.brand { margin-left: 22px; width: 110px; }
.lookup { width: 368px; height: 35px; margin-right: 21px; padding-left: 13px; background: #fff; border: 1px solid #d9d9d9; border-radius: 4px; color: #bfbfbf; line-height: 33px; }
.n-item { height: 50px; }
.n-item.on { width: 93px; padding-left: 22.500px; background: #119999; color: #d5f2f2; }
.n-item.cmp { margin-left: 22px; width: 108.500px; }
.about { margin-left: auto; margin-right: 35px; display: flex; align-items: center; gap: 7px; }

.page { flex: none; height: 1196px; padding: 18px 18px 18px 17px; display: flex; align-items: flex-start; gap: 18px; }
.panel { background: #f5f5f5; border: 1px solid #e4e4e4; }
.side { width: 614px; height: 868px; padding: 24px 17px 0 18px; font-family: "Noto Sans CJK SC", sans-serif; font-size: 15.400px; color: #222; }
.stabs { display: flex; height: 53px; border-bottom: 1px solid #e8e8e8; font-size: 17.600px; line-height: 48px; color: #5a5a5a; }
.stab { padding: 0 18px 0 17.500px; height: 53px; margin-right: 35.500px; }
.stab.on { color: #119999; border-bottom: 2px solid #119999; }
.field { margin-bottom: 28px; }
.field:nth-child(2) { margin-top: 10px; }
.field label { display: flex; align-items: center; height: 38.900px; padding-bottom: 2px; }
.field em { font-style: normal; color: #999; margin-left: 4px; }
.q { margin: 3px 0 0 4px; }
.ctl { height: 34.500px; border: 1px solid #d9d9d9; border-radius: 4px; background: #fff; display: flex; align-items: center; justify-content: space-between; padding: 0 13px 0 12px; color: #5a5a5a; }
.ctl.big { height: 39px; border-color: #c8c8c8; padding: 0 10px 1px; color: #333; }
.ctl.ph { color: #bbb; }
.spin { display: flex; flex-direction: column; gap: 1px; }
.spin i { width: 13px; height: 12px; border: 1px solid #aaa; border-radius: 3px; display: flex; align-items: center; justify-content: center; }
.btn { background: #fff; border: 1px solid #d9d9d9; border-radius: 4px; color: #5a5a5a; font: inherit; padding: 0; }
.find { width: 115px; height: 34.500px; margin-top: 35.200px; line-height: 30px; display: block; }

.results { width: 1893px; font-family: "Liberation Sans", Arial, sans-serif; }
.head { height: 71px; display: flex; align-items: center; justify-content: space-between; padding: 0 17px; }
.head h2 { margin: 0; padding-top: 2px; font-size: 22.400px; font-weight: 400; color: #222; }
.tr { width: 128px; height: 35px; font-size: 15.400px; }
.graph { margin-top: 22px; height: 1068px; border: 1px solid #e2e2e2; position: relative; }
.gbar { height: 37px; display: flex; align-items: center; background: #f5f5f5; border-top: 1px solid #ddd; margin: -1px 0 0; border-bottom: 1px solid #d8d8d8; box-shadow: 0 2px 6px rgba(0, 0, 0, .1); position: relative; font-size: 15.400px; color: #555; }
.g1 { margin-left: 24px; }
.g2 { margin-left: 6px; width: 54px; }
.g3 { margin-left: 59px; }
.g4 { margin-left: 22px; }
.g5 { margin-left: 5.500px; }
.g6 { margin-left: 5.500px; color: #0b74de; }
.g7 { margin-left: 5px; color: #999; width: 28px; }
.gfind { margin-left: auto; width: 437px; height: 35px; background: #fff; border-left: 1px solid #e4e4e4; display: flex; align-items: center; padding-left: 9px; gap: 20px; color: #bbb; font-size: 16px; }
.canvas { font-family: "Liberation Sans", Arial, sans-serif; }
.mini { position: absolute; left: 16px; bottom: 17px; display: flex; align-items: flex-end; gap: 16px; }
.map { width: 89px; height: 18px; border: 1px solid #777; background: #999; padding-left: 24px; box-shadow: 0 0 6px rgba(0, 0, 0, .2); }
.map i { width: 42px; height: 16px; background: #ccc; }
.full { width: 30px; height: 30px; border: 1px solid #777; background: #ccc; padding: 4px; box-shadow: 0 0 6px rgba(0, 0, 0, .2); }

.dock { flex: none; height: 65px; display: flex; align-items: stretch; position: relative; background: linear-gradient(90deg, #3d4442 0, #3a4140 330px, #333534 440px, #333837 600px, #383c3a 1300px, #3f423f 1800px, #3e4442 2090px); }
.wood { position: absolute; right: 0; top: 0; }
.app { width: 62px; height: 62px; margin: 2px 2px 0; padding-top: 6px; border-radius: 4px; display: flex; flex-direction: column; align-items: center; position: relative; }
.app.cur { background: #5f6563; }
.app p { margin: 2px 0 0; display: flex; gap: 3px; }
.app p i { width: 6px; height: 6px; border-radius: 3px; background: #e95420; }
.grid9 { position: relative; margin: 18px 18px 0 auto; height: 30px; display: grid; grid-template-columns: repeat(3, 6px); grid-auto-rows: 6px; gap: 6px; }
.grid9 i { border-radius: 50%; background: #f2f2f0; }
</style>
